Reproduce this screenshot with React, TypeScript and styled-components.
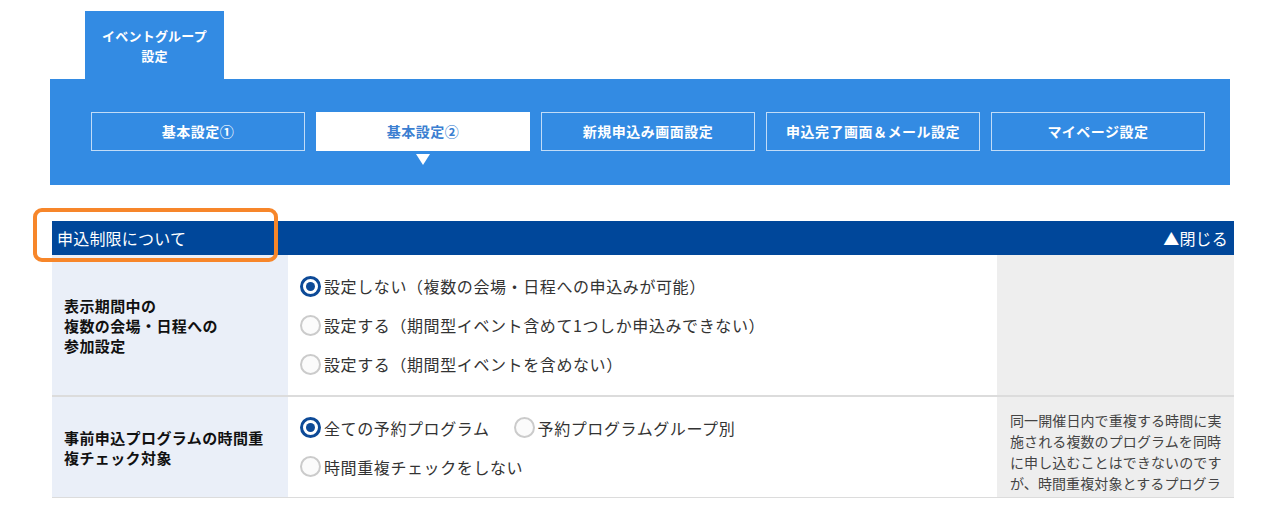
import React from "react";
import styled, { createGlobalStyle, css } from "styled-components";

const GlobalStyle = createGlobalStyle`
  html, body { margin: 0; padding: 0; background: #fff; }
  body {
    font-family: "Noto Sans CJK JP", "Noto Sans", sans-serif;
    color: #333;
  }
  * { box-sizing: border-box; }
`;

const BLUE = "#338be3";

const Page = styled.div`
  padding: 11px 0 0 50px;
  width: 1280px;
`;

const GroupTab = styled.div`
  margin-left: 35px;
  width: 139px;
  height: 68px;
  background: ${BLUE};
  color: #fff;
  font-weight: 700;
  font-size: 13px;
  line-height: 20px;
  letter-spacing: 0.2px;
  text-align: center;
  display: flex;
  align-items: center;
  justify-content: center;
  padding-top: 2px;
`;

const NavPanel = styled.nav`
  width: 1180px;
  height: 106px;
  background: ${BLUE};
  padding: 33px 0 0 41px;
`;

const NavGrid = styled.div`
  display: grid;
  grid-template-columns: repeat(5, 214px);
  column-gap: 11px;
`;

const NavButton = styled.div<{ $active?: boolean }>`
  position: relative;
  height: 39px;
  border: 1px solid rgba(255, 255, 255, 0.7);
  color: #fff;
  font-weight: 700;
  font-size: 14px;
  letter-spacing: 0.5px;
  display: flex;
  align-items: center;
  justify-content: center;
  padding-bottom: 1px;
  ${(p) =>
    p.$active &&
    css`
      background: #fff;
      border-color: #fff;
      color: #3b7fd1;
      &::after {
        content: "";
        position: absolute;
        left: 50%;
        top: 41px;
        transform: translateX(-50%);
        border-left: 7px solid transparent;
        border-right: 7px solid transparent;
        border-top: 11px solid #fff;
      }
    `}
`;

const Section = styled.section`
  position: relative;
  margin: 36px 0 0 2px;
  width: 1182px;
`;

const SectionHeader = styled.div`
  height: 34px;
  background: #00479a;
  color: #fff;
  font-size: 16px;
  letter-spacing: 0.2px;
  display: flex;
  align-items: center;
  justify-content: space-between;
  padding: 0 6px 0 5px;
`;

const Highlight = styled.div`
  position: absolute;
  left: -19px;
  top: -13px;
  width: 245px;
  height: 54px;
  border: 4px solid #f7862a;
  border-radius: 9px;
  pointer-events: none;
`;

const Row = styled.div<{ $height: number; $border: number }>`
  display: grid;
  grid-template-columns: 236px 709px 237px;
  height: ${(p) => p.$height}px;
  border-bottom: ${(p) => p.$border}px solid #dcdcdc;
`;

const LabelCell = styled.div`
  background: #eaeff8;
  padding: 2px 10px 0 12px;
  display: flex;
  align-items: center;
  font-weight: 700;
  font-size: 15px;
  letter-spacing: 0.4px;
  line-height: 20px;
  color: #111;
`;

const OptionsCell = styled.div`
  padding: 0 12px;
  display: flex;
  flex-direction: column;
  justify-content: center;
`;

const OptionLine = styled.div`
  display: flex;
  align-items: center;
  gap: 24px;
  height: 39px;
`;

const Option = styled.label`
  display: inline-flex;
  align-items: center;
  gap: 3px;
  font-size: 16px;
  letter-spacing: 0.6px;
  color: #333;
  white-space: nowrap;
`;

const RadioMark = styled.span<{ $checked?: boolean }>`
  width: 21px;
  height: 21px;
  border-radius: 50%;
  flex: none;
  position: relative;
  ${(p) =>
    p.$checked
      ? css`
          border: 3px solid #0d4a97;
          background: #fff;
          &::after {
            content: "";
            position: absolute;
            left: 50%;
            top: 50%;
            width: 9px;
            height: 9px;
            margin: -4.5px 0 0 -4.5px;
            border-radius: 50%;
            background: #0d4a97;
          }
        `
      : css`
          border: 2px solid #cbcbcb;
          background: #fbfbfb;
        `}
`;

const NoteCell = styled.div`
  background: #eeeeee;
  padding: 13px 12px 0 13px;
  font-size: 14px;
  line-height: 21px;
  letter-spacing: 0.1px;
  color: #444;
`;

const NoteText = styled.div`
  height: 84px;
  overflow: hidden;
`;

const Radio = ({ checked, children }: { checked?: boolean; children: React.ReactNode }) => (
  <Option>
    <RadioMark $checked={checked} />
    {children}
  </Option>
);

const navItems = ["基本設定①", "基本設定②", "新規申込み画面設定", "申込完了画面＆メール設定", "マイページ設定"];

export default function App() {
  return (
    <>
      <GlobalStyle />
      <Page>
        <GroupTab>
          イベントグループ
          <br />
          設定
        </GroupTab>
        <NavPanel>
          <NavGrid>
            {navItems.map((t, i) => (
              <NavButton key={t} $active={i === 1}>
                {t}
              </NavButton>
            ))}
          </NavGrid>
        </NavPanel>
        <Section>
          <SectionHeader>
            <span>申込制限について</span>
            <span>▲閉じる</span>
          </SectionHeader>
          <Highlight />
          <Row $height={142} $border={2}>
            <LabelCell>
              表示期間中の
              <br />
              複数の会場・日程への
              <br />
              参加設定
            </LabelCell>
            <OptionsCell>
              <OptionLine>
                <Radio checked>設定しない（複数の会場・日程への申込みが可能）</Radio>
              </OptionLine>
              <OptionLine>
                <Radio>設定する（期間型イベント含めて1つしか申込みできない）</Radio>
              </OptionLine>
              <OptionLine>
                <Radio>設定する（期間型イベントを含めない）</Radio>
              </OptionLine>
            </OptionsCell>
            <NoteCell />
          </Row>
          <Row $height={101} $border={1}>
            <LabelCell>
              事前申込プログラムの時間重
              <br />
              複チェック対象
            </LabelCell>
            <OptionsCell>
              <OptionLine>
                <Radio checked>全ての予約プログラム</Radio>
                <Radio>予約プログラムグループ別</Radio>
              </OptionLine>
              <OptionLine>
                <Radio>時間重複チェックをしない</Radio>
              </OptionLine>
            </OptionsCell>
            <NoteCell>
              <NoteText>
                同一開催日内で重複する時間に実施される複数のプログラムを同時に申し込むことはできないのですが、時間重複対象とするプログラムの範囲を選択してください。
              </NoteText>
            </NoteCell>
          </Row>
        </Section>
      </Page>
    </>
  );
}
